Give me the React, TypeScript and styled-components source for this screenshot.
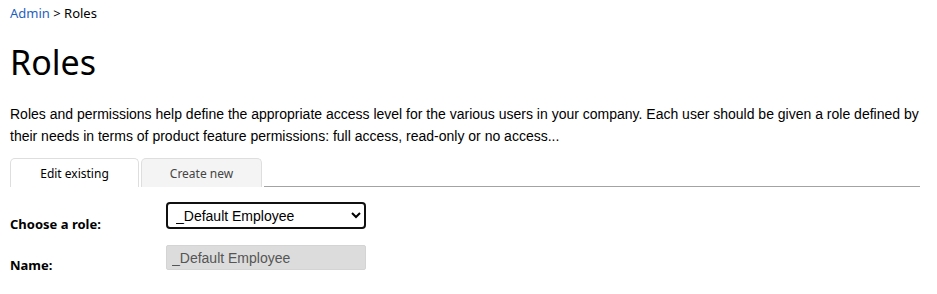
import React from 'react';
import styled, { createGlobalStyle } from 'styled-components';

const GlobalStyle = createGlobalStyle`
  body {
    margin: 0;
    background: #fff;
    font-family: "Noto Sans", "Open Sans", sans-serif;
    color: #000;
  }
`;

const Page = styled.div`
  padding: 4px 17px 0 10px;
`;

const Breadcrumb = styled.div`
  font-size: 13px;
  line-height: 18px;
`;

const Crumb = styled.a`
  color: #1f5fbf;
  text-decoration: none;
`;

const Title = styled.h1`
  font-size: 34px;
  font-weight: 400;
  margin: 18px 0 0;
  line-height: 44px;
`;

const Intro = styled.p`
  font-family: "Liberation Sans", Arial, sans-serif;
  font-size: 14px;
  line-height: 22px;
  margin: 19px 0 0;
`;

const TabBar = styled.div`
  display: flex;
  align-items: flex-end;
  margin-top: 11px;
`;

const Tab = styled.div<{ $active?: boolean }>`
  width: ${p => (p.$active ? '129px' : '121px')};
  height: 29px;
  box-sizing: border-box;
  margin-right: 2px;
  display: flex;
  align-items: center;
  justify-content: center;
  white-space: nowrap;
  font-size: 12px;
  color: ${p => (p.$active ? '#000' : '#444')};
  background: ${p => (p.$active ? '#fff' : '#f4f4f4')};
  border: 1px solid #dedede;
  border-bottom: none;
  border-radius: 5px 5px 0 0;
`;

const TabFill = styled.div`
  flex: 1;
  border-bottom: 1px solid #a3a3a3;
`;

const Form = styled.div`
  display: grid;
  grid-template-columns: 156px 200px;
  grid-template-rows: 27px 25px;
  row-gap: 16px;
  margin-top: 15px;
`;

const Label = styled.label`
  font-size: 13px;
  font-weight: 700;
  align-self: end;
  line-height: 16px;
  margin-bottom: -3px;
`;

const Select = styled.select`
  width: 200px;
  height: 27px;
  font-family: "Liberation Sans", Arial, sans-serif;
  font-size: 14px;
  color: #000;
  border: 2px solid #101010;
  border-radius: 4px;
  padding: 0 4px;
  background: #fff;
`;

const Input = styled.input`
  width: 200px;
  height: 25px;
  box-sizing: border-box;
  font-family: "Liberation Sans", Arial, sans-serif;
  font-size: 14px;
  color: #555;
  background: #dcdcdc;
  border: 1px solid #d4d4d4;
  border-radius: 2px;
  padding: 0 5px;
`;

export default function App() {
  return (
    <Page>
      <GlobalStyle />
      <Breadcrumb>
        <Crumb href="#">Admin</Crumb> &gt; Roles
      </Breadcrumb>
      <Title>Roles</Title>
      <Intro>
        Roles and permissions help define the appropriate access level for the various users in your company. Each user
        should be given a role defined by their needs in terms of product feature permissions: full access, read-only or
        no access...
      </Intro>
      <TabBar>
        <Tab $active>Edit existing</Tab>
        <Tab>Create new</Tab>
        <TabFill />
      </TabBar>
      <Form>
        <Label>Choose a role:</Label>
        <Select defaultValue="default">
          <option value="default">_Default Employee</option>
        </Select>
        <Label>Name:</Label>
        <Input value="_Default Employee" disabled readOnly />
      </Form>
    </Page>
  );
}
